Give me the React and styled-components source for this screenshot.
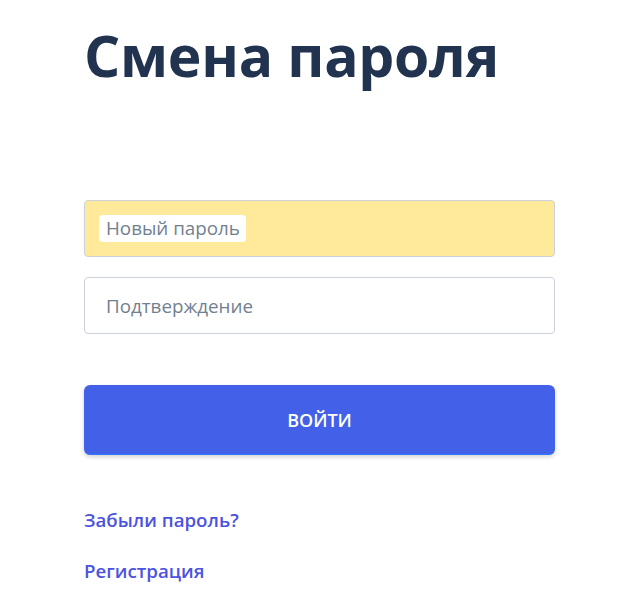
import React from "react";
import styled, { createGlobalStyle } from "styled-components";

const Global = createGlobalStyle`
  body {
    margin: 0;
    background: #ffffff;
    font-family: "Open Sans", "Noto Sans", sans-serif;
  }
`;

const Page = styled.main`
  width: 471px;
  margin-left: 84px;
  padding-top: 20px;
  display: flex;
  flex-direction: column;
`;

const Title = styled.h1`
  margin: 0;
  font-size: 57px;
  line-height: 70px;
  letter-spacing: -0.3px;
  font-weight: 700;
  color: #223350;
`;

const Form = styled.form`
  margin-top: 110px;
  display: flex;
  flex-direction: column;
  gap: 20px;
`;

const Field = styled.div`
  position: relative;
  height: 57px;
  box-sizing: border-box;
  border: 1px solid #cbd2dc;
  border-radius: 4px;
  background: ${(p) => (p.$filled ? "#ffe99b" : "#ffffff")};
  display: flex;
  align-items: center;
  padding-left: ${(p) => (p.$filled ? "14px" : "21px")};
`;

const Placeholder = styled.span`
  font-size: 18.8px;
  color: #727f91;
  background: ${(p) => (p.$chip ? "#ffffff" : "transparent")};
  border-radius: 4px;
  padding: ${(p) => (p.$chip ? "1px 6px 2px 7px" : "0")};
  line-height: 24px;
`;

const Submit = styled.button`
  margin-top: 31px;
  height: 70px;
  border: none;
  border-bottom: 1px solid #2c7bff;
  border-radius: 6px;
  background: #4361e8;
  color: #ffffff;
  font-family: inherit;
  font-size: 18px;
  font-weight: 600;
  box-shadow: 0 2px 4px rgba(0, 0, 0, 0.18);
  cursor: pointer;
`;

const Links = styled.nav`
  margin-top: 53px;
  display: flex;
  flex-direction: column;
  gap: 27px;
`;

const Link = styled.a`
  font-size: 18.7px;
  font-weight: 600;
  color: #4b53e0;
  text-decoration: none;
  line-height: 24px;
`;

export default function App() {
  return (
    <>
      <Global />
      <Page>
        <Title>Смена пароля</Title>
        <Form onSubmit={(e) => e.preventDefault()}>
          <Field $filled>
            <Placeholder $chip>Новый пароль</Placeholder>
          </Field>
          <Field>
            <Placeholder>Подтверждение</Placeholder>
          </Field>
          <Submit type="submit">ВОЙТИ</Submit>
        </Form>
        <Links>
          <Link href="#">Забыли пароль?</Link>
          <Link href="#">Регистрация</Link>
        </Links>
      </Page>
    </>
  );
}
